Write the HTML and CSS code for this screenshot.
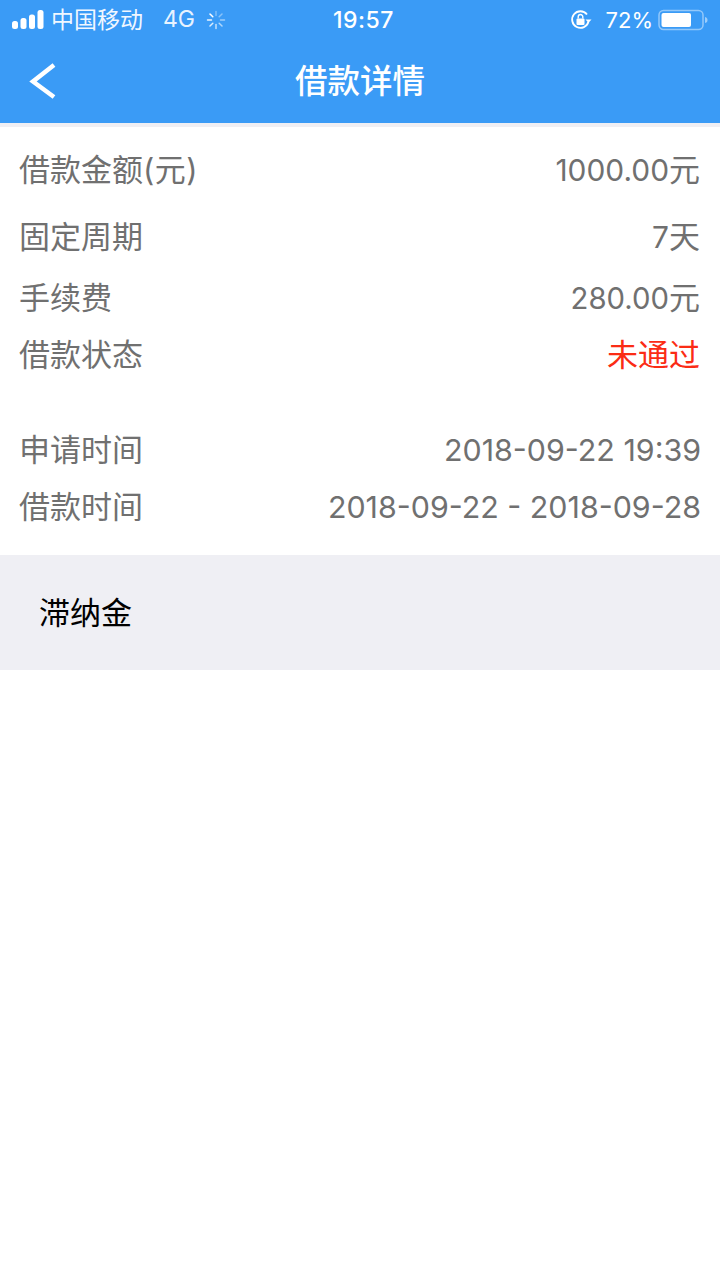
FILE: index.html
```html
<!DOCTYPE html>
<html lang="zh">
<head>
<meta charset="utf-8">
<title>借款详情</title>
<link rel="stylesheet" href="styles.css">
</head>
<body>
<header class="top">
  <div class="status">
    <div class="status-left">
      <svg class="signal" width="32" height="20" viewBox="0 0 32 20"><rect x="0" y="11" width="6" height="8" rx="2.5"/><rect x="8.500" y="8" width="6" height="11" rx="2.500"/><rect x="17" y="4.500" width="6" height="14.500" rx="2.500"/><rect x="25.500" y="0" width="6" height="19" rx="2.500"/></svg>
      <span class="carrier">中国移动</span>
      <span class="net">4G</span>
      <svg class="spin" width="20" height="20" viewBox="0 0 20 20"><g stroke="#fff" stroke-width="1.500" stroke-linecap="round"><path d="M10 1.500v4" opacity=".35"/><path d="M16 4l-2.800 2.800" opacity=".4"/><path d="M18.500 10h-4" opacity=".5"/><path d="M16 16l-2.800-2.800" opacity=".6"/><path d="M10 18.500v-4" opacity=".7"/><path d="M4 16l2.800-2.800" opacity=".8"/><path d="M1.500 10h4" opacity=".9"/><path d="M4 4l2.800 2.800"/></g></svg>
    </div>
    <div class="clock">19:57</div>
    <div class="status-right">
      <svg class="lock" width="22" height="22" viewBox="0 0 22 22"><path d="M18.500 12.500A8.300 8.300 0 1 1 17 5.500" fill="none" stroke="#fff" stroke-width="1.800"/><path d="M15.500 10.500h6l-3 3.200z" fill="#fff"/><rect x="6.500" y="9.500" width="8" height="6.500" rx="1" fill="#fff"/><path d="M8.200 9.500V7.800a2.300 2.300 0 0 1 4.600 0v1.700" fill="none" stroke="#fff" stroke-width="1.400"/></svg>
      <span class="pct">72%</span>
      <svg class="battery" width="50" height="22" viewBox="0 0 50 22"><rect x="1" y="1.500" width="44" height="19" rx="4.500" fill="none" stroke="#fff" stroke-opacity=".45" stroke-width="1.500"/><rect x="3.500" y="4" width="29.500" height="14" rx="2" fill="#fff"/><path d="M47 8c2 .5 2.500 1.500 2.500 3s-.5 2.500-2.500 3z" fill="#fff" fill-opacity=".5"/></svg>
    </div>
  </div>
  <div class="nav">
    <svg class="back" width="28" height="38" viewBox="0 0 28 38"><path d="M25 3L4 19.500 25 35" fill="none" stroke="#fff" stroke-width="4.500"/></svg>
    <h1 class="title">借款详情</h1>
  </div>
</header>
<main class="details">
  <div class="row r1"><span>借款金额<span class="paren">(元)</span></span><span><span class="amount">1000.00</span>元</span></div>
  <div class="row r2"><span>固定周期</span><span><span class="amount">7</span>天</span></div>
  <div class="row r3"><span>手续费</span><span><span class="amount-sm">280.00</span>元</span></div>
  <div class="row r4"><span>借款状态</span><span class="red">未通过</span></div>
  <div class="row r5"><span>申请时间</span><span class="date">2018-09-22 19:39</span></div>
  <div class="row r4"><span>借款时间</span><span class="date">2018-09-22 - 2018-09-28</span></div>
</main>
<section class="late">滞纳金</section>
</body>
</html>
```
FILE: styles.css
```css
* { box-sizing: border-box; }
html, body { margin: 0; padding: 0; }
body {
  width: 720px;
  height: 1280px;
  background: #fff;
  font-family: "Inter", "Noto Sans CJK SC", sans-serif;
  overflow: hidden;
}
.top { height: 123px; background: #3a9bf6; color: #fff; }
.status {
  height: 40px;
  display: flex;
  align-items: center;
  justify-content: space-between;
  padding: 0 12px 0 12px;
  position: relative;
  font-size: 23px;
}
.status-left, .status-right { display: flex; align-items: center; }
.signal { fill: #fff; }
.carrier { margin-left: 7px; color: #f0f7ff; padding-bottom: 4px; }
.net { margin-left: 20px; color: #e8f3ff; padding-bottom: 2px; }
.spin { margin-left: 11px; }
.clock {
  position: absolute;
  left: 7px;
  right: 0;
  text-align: center;
  font-weight: 500;
  font-size: 23px;
  letter-spacing: .5px;
}
.pct { margin-left: 14px; font-size: 22px; }
.battery { margin-left: 5px; }
.nav {
  height: 83px;
  display: flex;
  align-items: center;
  justify-content: center;
  position: relative;
}
.back { position: absolute; left: 29px; top: 22px; }
.title { margin: 0; font-size: 32.500px; font-weight: 500; line-height: 80px; }
.details {
  border-top: 4px solid #efeff4;
  padding: 20px 20px 31px 19px;
  height: 432px;
}
.row {
  display: flex;
  justify-content: space-between;
  align-items: center;
  height: 40px;
  font-size: 31px;
  color: #707070;
}
.amount { font-size: 29.900px; }
.amount-sm { font-size: 29.300px; }
.date { font-size: 30.400px; padding-top: 6px; margin-right: -1px; }
.paren { letter-spacing: .500px; }
.r2 { margin-top: 27px; }
.r3 { margin-top: 21px; }
.r4 { margin-top: 17px; }
.r5 { margin-top: 55px; }
.red { color: #fb2c15; }
.late {
  height: 115px;
  background: #efeff4;
  padding: 0 0 5px 39px;
  display: flex;
  align-items: center;
  font-size: 31px;
  color: #000;
}
```
